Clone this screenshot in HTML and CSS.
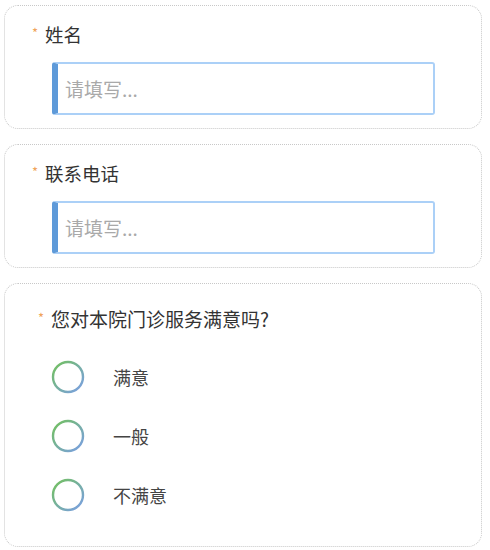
FILE: index.html
```html
<!DOCTYPE html>
<html lang="zh">
<head>
<meta charset="utf-8">
<link rel="stylesheet" href="styles.css">
</head>
<body>
<div class="form">
  <div class="card">
    <div class="label"><span class="req">*</span>姓名</div>
    <div class="input">请填写...</div>
  </div>
  <div class="card">
    <div class="label"><span class="req">*</span>联系电话</div>
    <div class="input">请填写...</div>
  </div>
  <div class="card card-q">
    <div class="label label-q"><span class="req">*</span>您对本院门诊服务满意吗?</div>
    <div class="options">
      <div class="option">
        <svg class="radio" viewBox="0 0 34 34" width="34" height="34"><defs><linearGradient id="g1" x1="0" y1="0" x2="1" y2="1"><stop offset="0" stop-color="#72c15a"/><stop offset="1" stop-color="#7b9ee8"/></linearGradient></defs><circle cx="17" cy="17" r="15" fill="none" stroke="url(#g1)" stroke-width="2.4"/></svg>
        <span class="opt-text">满意</span>
      </div>
      <div class="option">
        <svg class="radio" viewBox="0 0 34 34" width="34" height="34"><circle cx="17" cy="17" r="15" fill="none" stroke="url(#g1)" stroke-width="2.4"/></svg>
        <span class="opt-text">一般</span>
      </div>
      <div class="option">
        <svg class="radio" viewBox="0 0 34 34" width="34" height="34"><circle cx="17" cy="17" r="15" fill="none" stroke="url(#g1)" stroke-width="2.4"/></svg>
        <span class="opt-text">不满意</span>
      </div>
    </div>
  </div>
</div>
</body>
</html>
```
FILE: styles.css
```css
html, body {
  margin: 0;
  padding: 0;
  background: #ffffff;
}
body {
  font-family: "Noto Sans CJK SC", "Noto Sans", sans-serif;
  color: #333333;
}
.form {
  padding: 5px 8px 0 4px;
  display: flex;
  flex-direction: column;
  gap: 15px;
}
.card {
  border: 1px dotted #c8c8c8;
  border-radius: 14px;
  padding: 16px 0 13px 27px;
}
.label {
  font-size: 18.5px;
  line-height: 24px;
  height: 24px;
  display: flex;
  align-items: flex-start;
}
.label-q {
  font-size: 19px;
}
.req {
  color: #f0a35a;
  font-size: 13px;
  line-height: 16px;
  width: 13px;
  margin-top: 3px;
}
.input {
  margin-top: 16px;
  margin-left: 20px;
  width: 368px;
  height: 49px;
  border: 2px solid #abd0f7;
  border-left: 6px solid #5e9ad9;
  border-radius: 3px;
  box-sizing: content-box;
  padding-left: 7px;
  font-size: 19px;
  line-height: 49px;
  color: #a9a9a9;
}
.card-q {
  padding: 23px 0 34px 33px;
}
.options {
  margin-top: 29px;
  display: flex;
  flex-direction: column;
  gap: 25px;
}
.option {
  display: flex;
  align-items: center;
  height: 34px;
  margin-left: 13px;
}
.radio {
  display: block;
  flex: none;
}
.opt-text {
  margin-left: 28px;
  font-size: 18px;
  color: #444444;
}
```
